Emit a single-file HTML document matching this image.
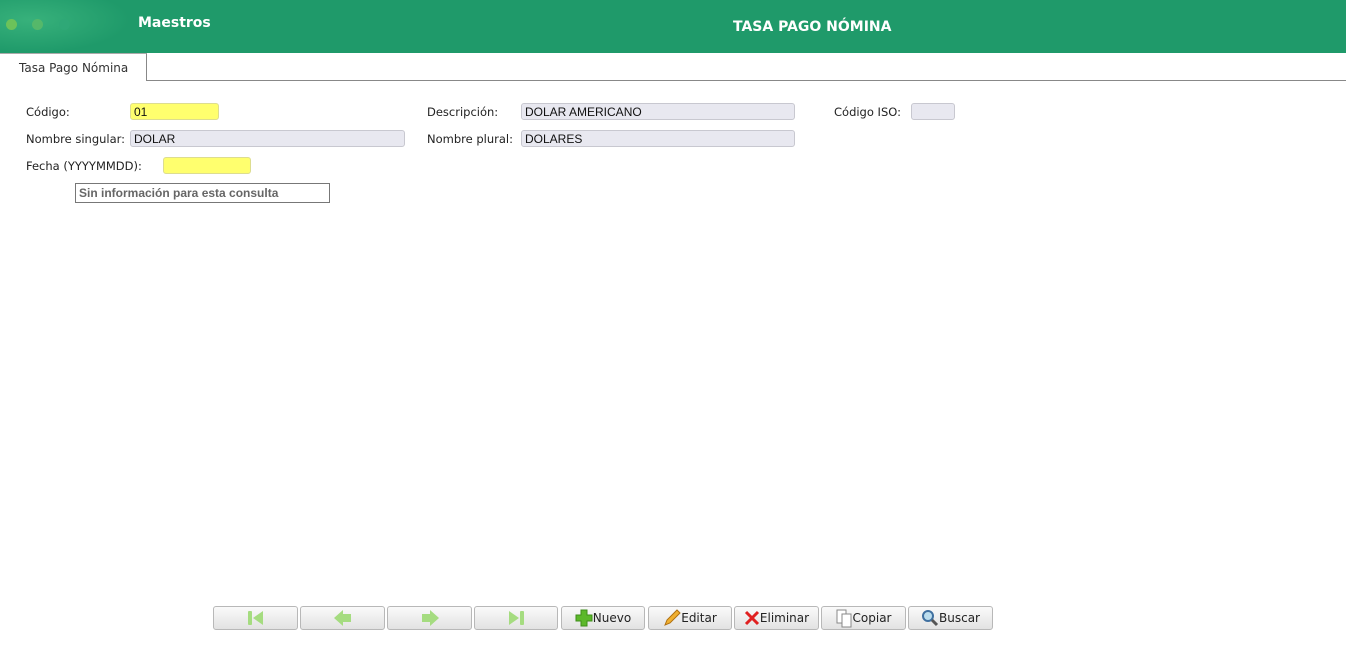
<!DOCTYPE html>
<html><head><meta charset="utf-8"><style>
*{box-sizing:border-box;margin:0;padding:0}
body{width:1346px;height:661px;background:#fff;font-family:"DejaVu Sans","Liberation Sans",sans-serif;font-size:11.5px;color:#222;position:relative;overflow:hidden}
.hdr{position:absolute;left:0;top:0;width:1346px;height:53px;background:#1f9a6a}
.hdr .glow{position:absolute;left:0;top:0;width:130px;height:53px;background:radial-gradient(ellipse at 30px 20px,rgba(80,200,140,.5),rgba(31,154,106,0) 70%)}
.dot{position:absolute;top:19px;width:11px;height:11px;border-radius:50%}
.t1{position:absolute;left:138px;top:15px;color:#fff;font-weight:bold;font-size:14px}
.t2{position:absolute;left:733px;top:19px;color:#fff;font-weight:bold;font-size:14px}
.tabline{position:absolute;left:146px;top:80px;width:1200px;height:1px;background:#888}
.tab{position:absolute;left:0;top:53px;width:147px;height:28px;border-right:1px solid #888;border-top:1px solid #aaa;background:#fff;font-size:12px;padding:7px 0 0 19px;color:#333}
.l{position:absolute;font-size:11.5px;color:#222}
.in{position:absolute;height:17px;border:1px solid #c8c8d0;border-radius:3px;background:#e8e8f0;font-family:"Liberation Sans",sans-serif;font-size:12px;padding:1px 3px;color:#111}
.y{background:#ffff6e;border-color:#dddd90}
.msg{position:absolute;left:75px;top:183px;width:255px;height:20px;border:1px solid #777;font-family:"Liberation Sans",sans-serif;font-weight:bold;font-size:12px;color:#666;padding:2px 3px}
.b{position:absolute;top:606px;height:24px;border:1px solid #b8b8b8;border-radius:3px;background:linear-gradient(#fafafa,#e2e2e2);font-size:12px;display:flex;align-items:center;justify-content:center;color:#222}
</style></head><body>
<div class="hdr"><div class="glow"></div>
<div class="dot" style="left:6px;background:#6cc25a"></div>
<div class="dot" style="left:32px;background:#55b86a"></div>
<div class="dot" style="left:59px;background:#2fa877"></div>
<div class="t1">Maestros</div><div class="t2">TASA PAGO NÓMINA</div></div>
<div class="tabline"></div>
<div class="tab">Tasa Pago Nómina</div>
<div class="l" style="left:26px;top:105px">Código:</div>
<div class="in y" style="left:130px;top:103px;width:89px">01</div>
<div class="l" style="left:427px;top:105px">Descripción:</div>
<div class="in" style="left:521px;top:103px;width:274px">DOLAR AMERICANO</div>
<div class="l" style="left:834px;top:105px">Código ISO:</div>
<div class="in" style="left:911px;top:103px;width:44px"></div>
<div class="l" style="left:26px;top:132px">Nombre singular:</div>
<div class="in" style="left:130px;top:130px;width:275px">DOLAR</div>
<div class="l" style="left:427px;top:132px">Nombre plural:</div>
<div class="in" style="left:521px;top:130px;width:274px">DOLARES</div>
<div class="l" style="left:26px;top:159px">Fecha (YYYYMMDD):</div>
<div class="in y" style="left:163px;top:157px;width:88px"></div>
<div class="msg">Sin información para esta consulta</div>

<div class="b" style="left:213px;width:85px"><svg width="18" height="18"><rect x="1" y="2" width="4" height="14" rx="1" fill="#a5dc80"/><path d="M16 2L6 9L16 16Z" fill="#a5dc80"/></svg></div>
<div class="b" style="left:300px;width:85px"><svg width="20" height="18"><path d="M1 9L10 1V5H18V13H10V17Z" fill="#a5dc80"/></svg></div>
<div class="b" style="left:387px;width:85px"><svg width="20" height="18"><path d="M19 9L10 1V5H2V13H10V17Z" fill="#a5dc80"/></svg></div>
<div class="b" style="left:474px;width:84px"><svg width="18" height="18"><path d="M2 2L12 9L2 16Z" fill="#a5dc80"/><rect x="13" y="2" width="4" height="14" rx="1" fill="#a5dc80"/></svg></div>
<div class="b" style="left:561px;width:84px"><svg width="18" height="18"><path d="M6 1H12V6H17V12H12V17H6V12H1V6H6Z" fill="#5cb82a" stroke="#3e8e1a"/></svg>Nuevo</div>
<div class="b" style="left:648px;width:84px"><svg width="18" height="18"><path d="M2 16L4 11L14 1L17 4L7 14Z" fill="#f0b030" stroke="#b07010"/></svg>Editar</div>
<div class="b" style="left:734px;width:85px"><svg width="16" height="16"><path d="M2 2L14 14M14 2L2 14" stroke="#e02020" stroke-width="3"/></svg>Eliminar</div>
<div class="b" style="left:821px;width:85px"><svg width="17" height="19"><rect x="1" y="1" width="9" height="13" fill="#fff" stroke="#888"/><rect x="6" y="5" width="9" height="13" fill="#fff" stroke="#888"/></svg>Copiar</div>
<div class="b" style="left:908px;width:85px"><svg width="18" height="18"><circle cx="7" cy="7" r="5" fill="#bde" stroke="#4070a0" stroke-width="2"/><path d="M11 11L16 16" stroke="#555" stroke-width="3"/></svg>Buscar</div>
</body></html>
